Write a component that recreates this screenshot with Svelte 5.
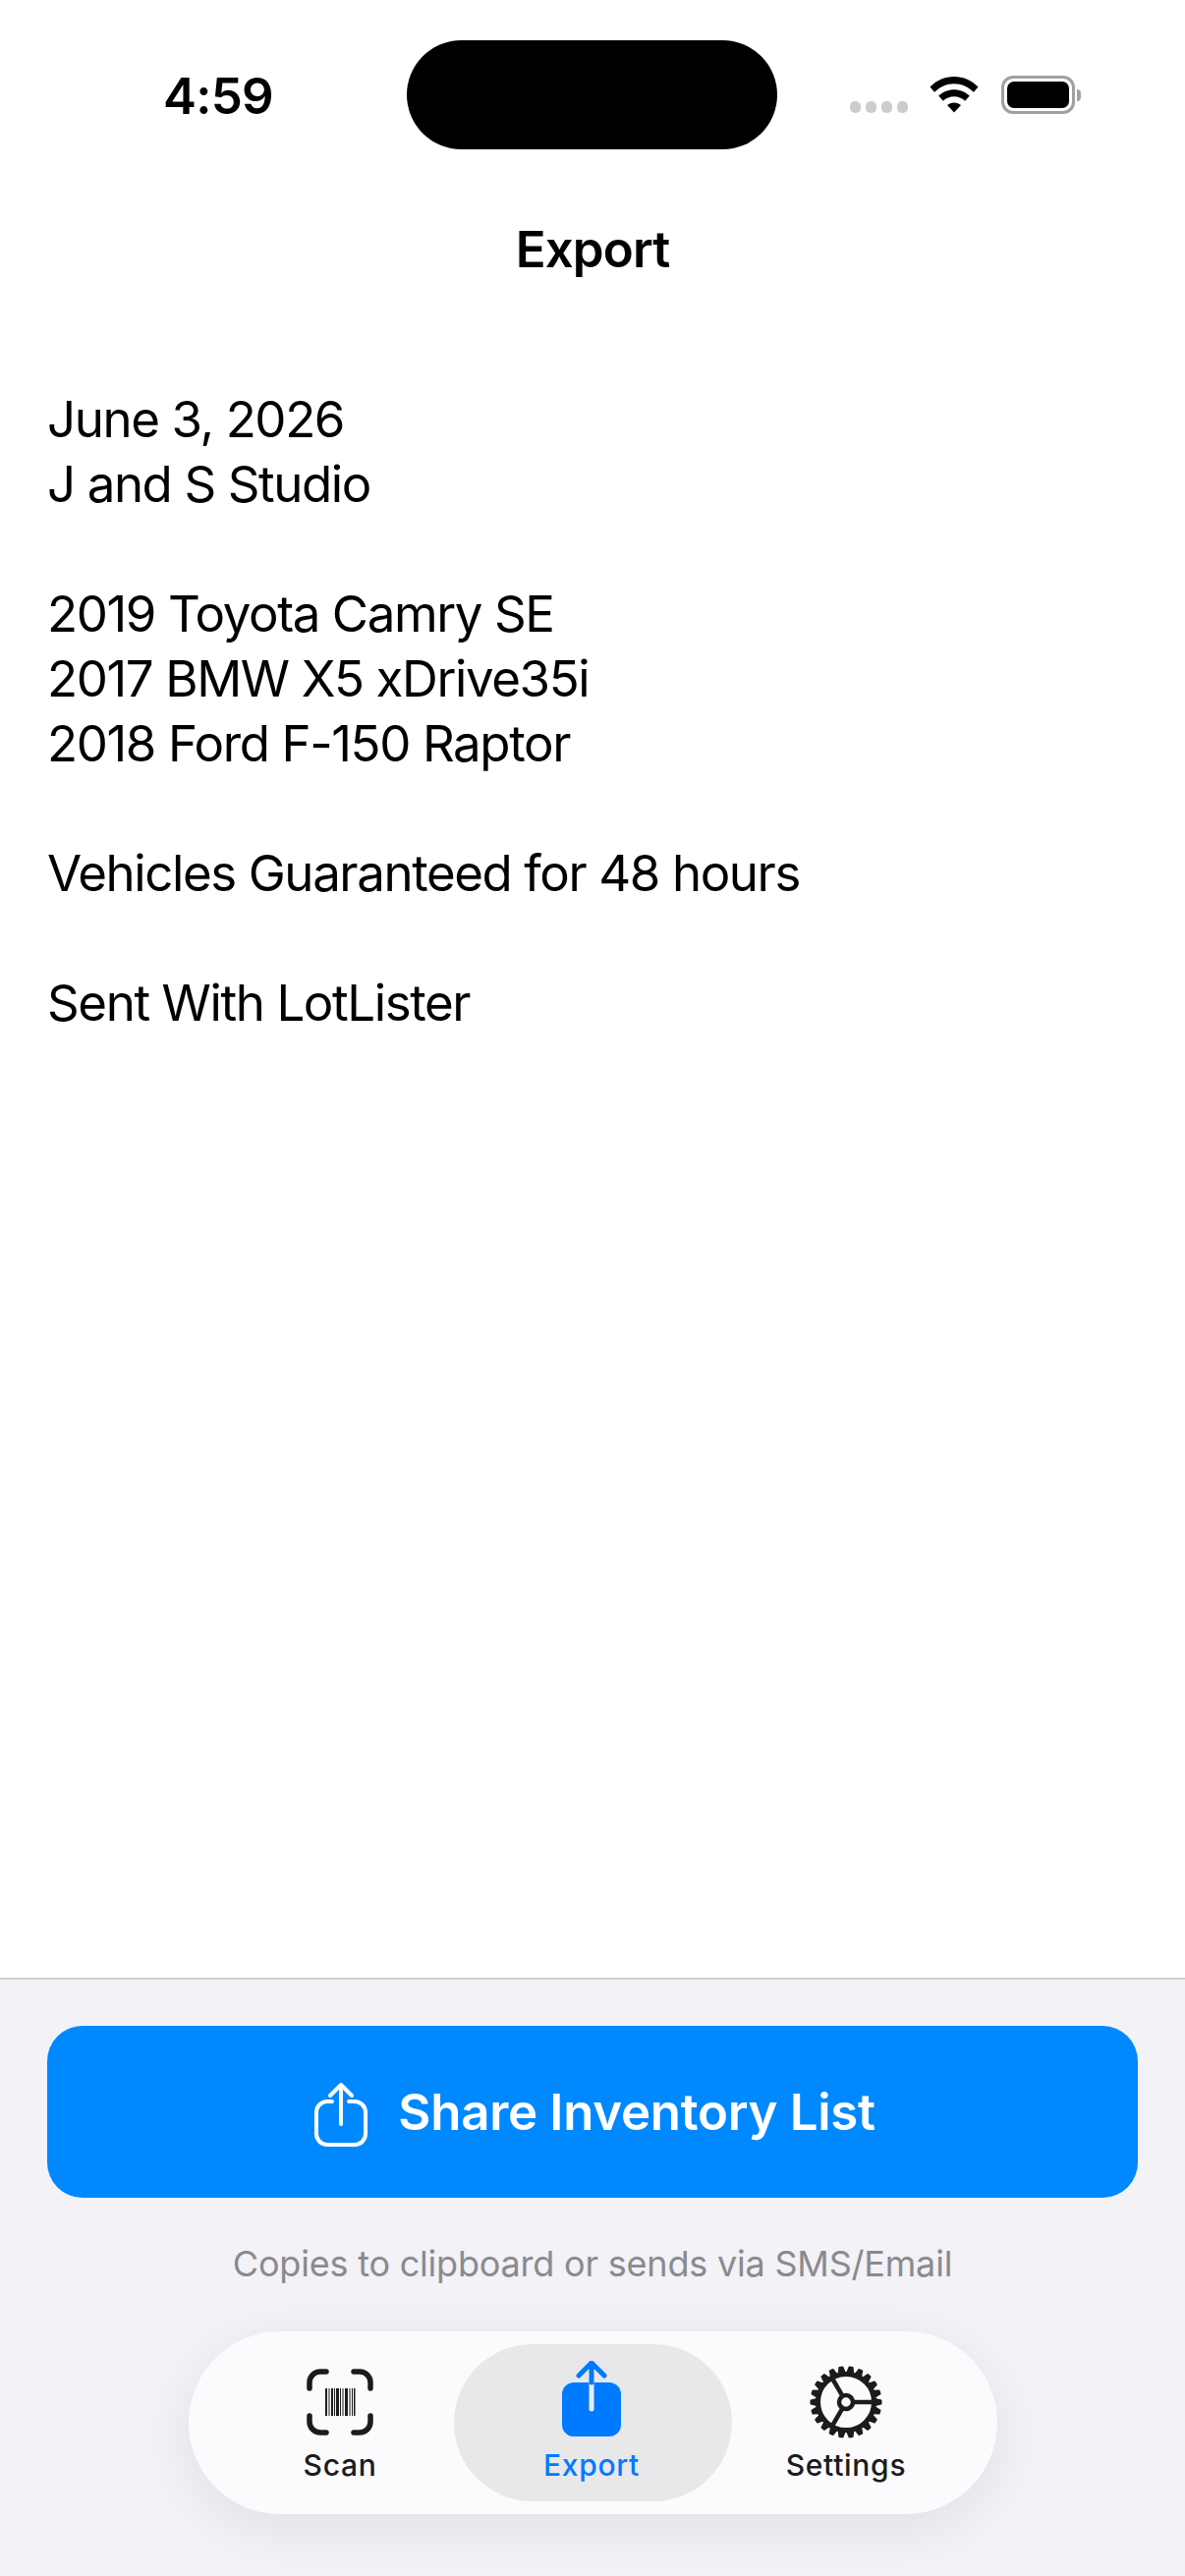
<script>
	const lines = [
		'June 3, 2026',
		'J and S Studio',
		'',
		'2019 Toyota Camry SE',
		'2017 BMW X5 xDrive35i',
		'2018 Ford F-150 Raptor',
		'',
		'Vehicles Guaranteed for 48 hours',
		'',
		'Sent With LotLister'
	];
	const bars = [
		[0, 2], [3.5, 1], [6, 2], [9, 1], [11, 3], [15, 1], [17.5, 1], [20, 3], [24.5, 1], [27, 1], [29, 1.5]
	];

	// 22 tapered teeth around the settings gear, one sits at 3 o'clock
	const teeth = 22;
	let gear = '';
	for (let i = 0; i < teeth; i++) {
		const a = (i * 2 * Math.PI) / teeth;
		const pts = [
			[30, -0.11],
			[35.8, -0.05],
			[35.8, 0.05],
			[30, 0.11]
		].map(([r, d]) => `${(38 + r * Math.cos(a + d)).toFixed(2)} ${(38 + r * Math.sin(a + d)).toFixed(2)}`);
		gear += `M${pts.join('L')}Z`;
	}
</script>

<div class="screen">
	<div class="status">
		<div class="time">4:59</div>
		<div class="island"></div>
		<div class="indicators">
			<div class="dots"><i></i><i></i><i></i><i></i></div>
			<svg class="wifi" width="50" height="38" viewBox="0 0 50 38">
				<path d="M0.5 11.5C7 5 15.5 1 25 1s18 4 24.5 10.5l-4.6 5.2C39.6 11.5 32.6 8.2 25 8.2S10.4 11.5 5.1 16.7z" />
				<path d="M9.2 20.6C13.4 16.6 19 14.2 25 14.2s11.6 2.4 15.8 6.4l-4.6 5.1C33.1 22.9 29.2 21.3 25 21.3s-8.1 1.6-11.2 4.4z" />
				<path d="M18 29.9c2-1.6 4.4-2.5 7-2.5s5 .9 7 2.5L25 37.6z" />
			</svg>
			<div class="battery"><div class="level"></div></div>
			<div class="nub"></div>
		</div>
	</div>

	<h1>Export</h1>

	<main class="list">
		{#each lines as line}
			<div class="line">{line}</div>
		{/each}
	</main>

	<footer>
		<button class="share">
			<svg width="56" height="68" viewBox="0 0 56 68" fill="none" stroke="#fff" stroke-width="4" stroke-linecap="round" stroke-linejoin="round">
				<path d="M36 20h6a11 11 0 0 1 11 11v22a11 11 0 0 1-11 11H14A11 11 0 0 1 3 53V31a11 11 0 0 1 11-11h5" />
				<path d="M28 43V3M17 14L28 3l11 11" />
			</svg>
			<span>Share Inventory List</span>
		</button>
		<p class="hint">Copies to clipboard or sends via SMS/Email</p>

		<nav>
			<div class="tab scan">
				<svg width="68" height="68" viewBox="0 0 68 68" fill="none" stroke="#1c1c1e" stroke-width="5.5" stroke-linecap="round">
					<path d="M3 20V14A11 11 0 0 1 14 3h6M48 3h6a11 11 0 0 1 11 11v6M65 48v6a11 11 0 0 1-11 11h-6M20 65h-6A11 11 0 0 1 3 54v-6" />
					{#each bars as [x, w]}
						<rect x={19 + x} y="20" width={w} height="28" fill="#1c1c1e" stroke="none" />
					{/each}
				</svg>
				<span>Scan</span>
			</div>
			<div class="tab active">
				<svg width="64" height="78" viewBox="0 0 64 78">
					<rect x="2" y="22" width="60" height="55" rx="12" fill="#007aff" />
					<path d="M32 49V3" stroke="#e9eef5" stroke-width="5" stroke-linecap="round" fill="none" />
					<path d="M32 22V3M19 15L32 2l13 13" stroke="#007aff" stroke-width="5" stroke-linecap="round" stroke-linejoin="round" fill="none" />
				</svg>
				<span>Export</span>
			</div>
			<div class="tab gear">
				<svg width="76" height="76" viewBox="0 0 76 76" fill="none" stroke="#1c1c1e">
					<path d={gear} fill="#1c1c1e" stroke-width="1.5" stroke-linejoin="round" />
					<circle cx="38" cy="38" r="28.5" stroke-width="5" />
					<circle cx="38" cy="38" r="7" stroke-width="4.5" />
					<path d="M45 38H66M34.5 31.9L23.5 13M34.5 44.1L23.5 63" stroke-width="4.5" />
				</svg>
				<span>Settings</span>
			</div>
		</nav>
	</footer>
</div>

<style>
	:global(body) {
		margin: 0;
		background: #fff;
	}

	.screen {
		width: 1206px;
		height: 2622px;
		display: flex;
		flex-direction: column;
		font-family: Inter, "Liberation Sans", sans-serif;
		color: #000;
		overflow: hidden;
	}

	.status {
		display: grid;
		grid-template-columns: 414px 377px 1fr;
		height: 111px;
		padding-top: 41px;
		align-items: center;
	}

	.time {
		padding-left: 166px;
		font-size: 51px;
		font-weight: 600;
		line-height: 1;
		margin-top: 1px;
		letter-spacing: -0.8px;
	}

	.island {
		height: 111px;
		background: #000;
		border-radius: 56px;
	}

	.indicators {
		display: flex;
		align-items: flex-end;
		padding-left: 74px;
		height: 40px;
		margin-top: -2px;
	}

	.dots {
		display: flex;
		gap: 5px;
		margin-bottom: 1px;
	}

	.dots i {
		width: 11px;
		height: 12px;
		border-radius: 5px;
		background: #ccc;
	}

	.wifi {
		margin-left: 22px;
		margin-bottom: 1px;
		fill: #000;
	}

	.battery {
		margin-left: 23px;
		box-sizing: border-box;
		width: 75px;
		height: 39px;
		border: 3px solid #a0a0a0;
		border-radius: 12px;
		padding: 3px;
	}

	.level {
		height: 100%;
		background: #000;
		border-radius: 7px;
	}

	.nub {
		width: 4px;
		height: 12px;
		margin: 0 0 13px 2px;
		background: #a0a0a0;
		border-radius: 0 4px 4px 0;
	}

	h1 {
		margin: 0;
		padding-top: 72px;
		font-size: 51px;
		line-height: 60px;
		font-weight: 600;
		text-align: center;
		letter-spacing: -0.9px;
	}

	.list {
		flex: 1;
		padding: 110px 0 0 48px;
		font-size: 51px;
		line-height: 66px;
		font-weight: 400;
		letter-spacing: -1.4px;
	}

	.line {
		height: 66px;
	}

	footer {
		height: 609px;
		box-sizing: border-box;
		border-top: 2px solid #cfcfd2;
		background: #f2f2f7;
		padding-top: 47px;
		display: flex;
		flex-direction: column;
		align-items: center;
	}

	.share {
		width: 1110px;
		height: 175px;
		border: 0;
		border-radius: 36px;
		background: #0088ff;
		color: #fff;
		display: flex;
		align-items: center;
		justify-content: center;
		gap: 30px;
		font: inherit;
		font-size: 51px;
		font-weight: 600;
		letter-spacing: -0.3px;
		padding-left: 10px;
	}

	.share svg {
		margin-top: 6px;
	}

	.hint {
		margin: 45px 0 0;
		font-size: 36px;
		line-height: 44px;
		color: #8a8a8e;
		letter-spacing: -0.2px;
	}

	nav {
		margin-top: 47px;
		box-sizing: border-box;
		width: 823px;
		height: 186px;
		padding: 13px;
		border-radius: 93px;
		background: #fbfbfd;
		box-shadow: 0 14px 60px rgba(0, 0, 0, 0.08);
		display: grid;
		grid-template-columns: 257px 283px 257px;
	}

	.tab {
		display: flex;
		flex-direction: column;
		align-items: center;
		justify-content: flex-end;
		border-radius: 80px;
		padding-bottom: 19px;
		font-size: 30px;
		font-weight: 500;
		line-height: 36px;
		letter-spacing: 0.7px;
		color: #1c1c1e;
	}

	.tab svg {
		display: block;
	}

	.scan {
		padding-left: 26px;
	}

	.scan svg {
		margin-bottom: 12px;
	}

	.gear {
		padding-right: 24px;
	}

	.gear svg {
		margin-bottom: 8px;
	}

	.active {
		background: #e8e8ea;
		color: #007aff;
	}

	.active svg {
		margin-bottom: 10px;
		margin-right: 2px;
	}

	.active span {
		margin-right: 2px;
	}
</style>
